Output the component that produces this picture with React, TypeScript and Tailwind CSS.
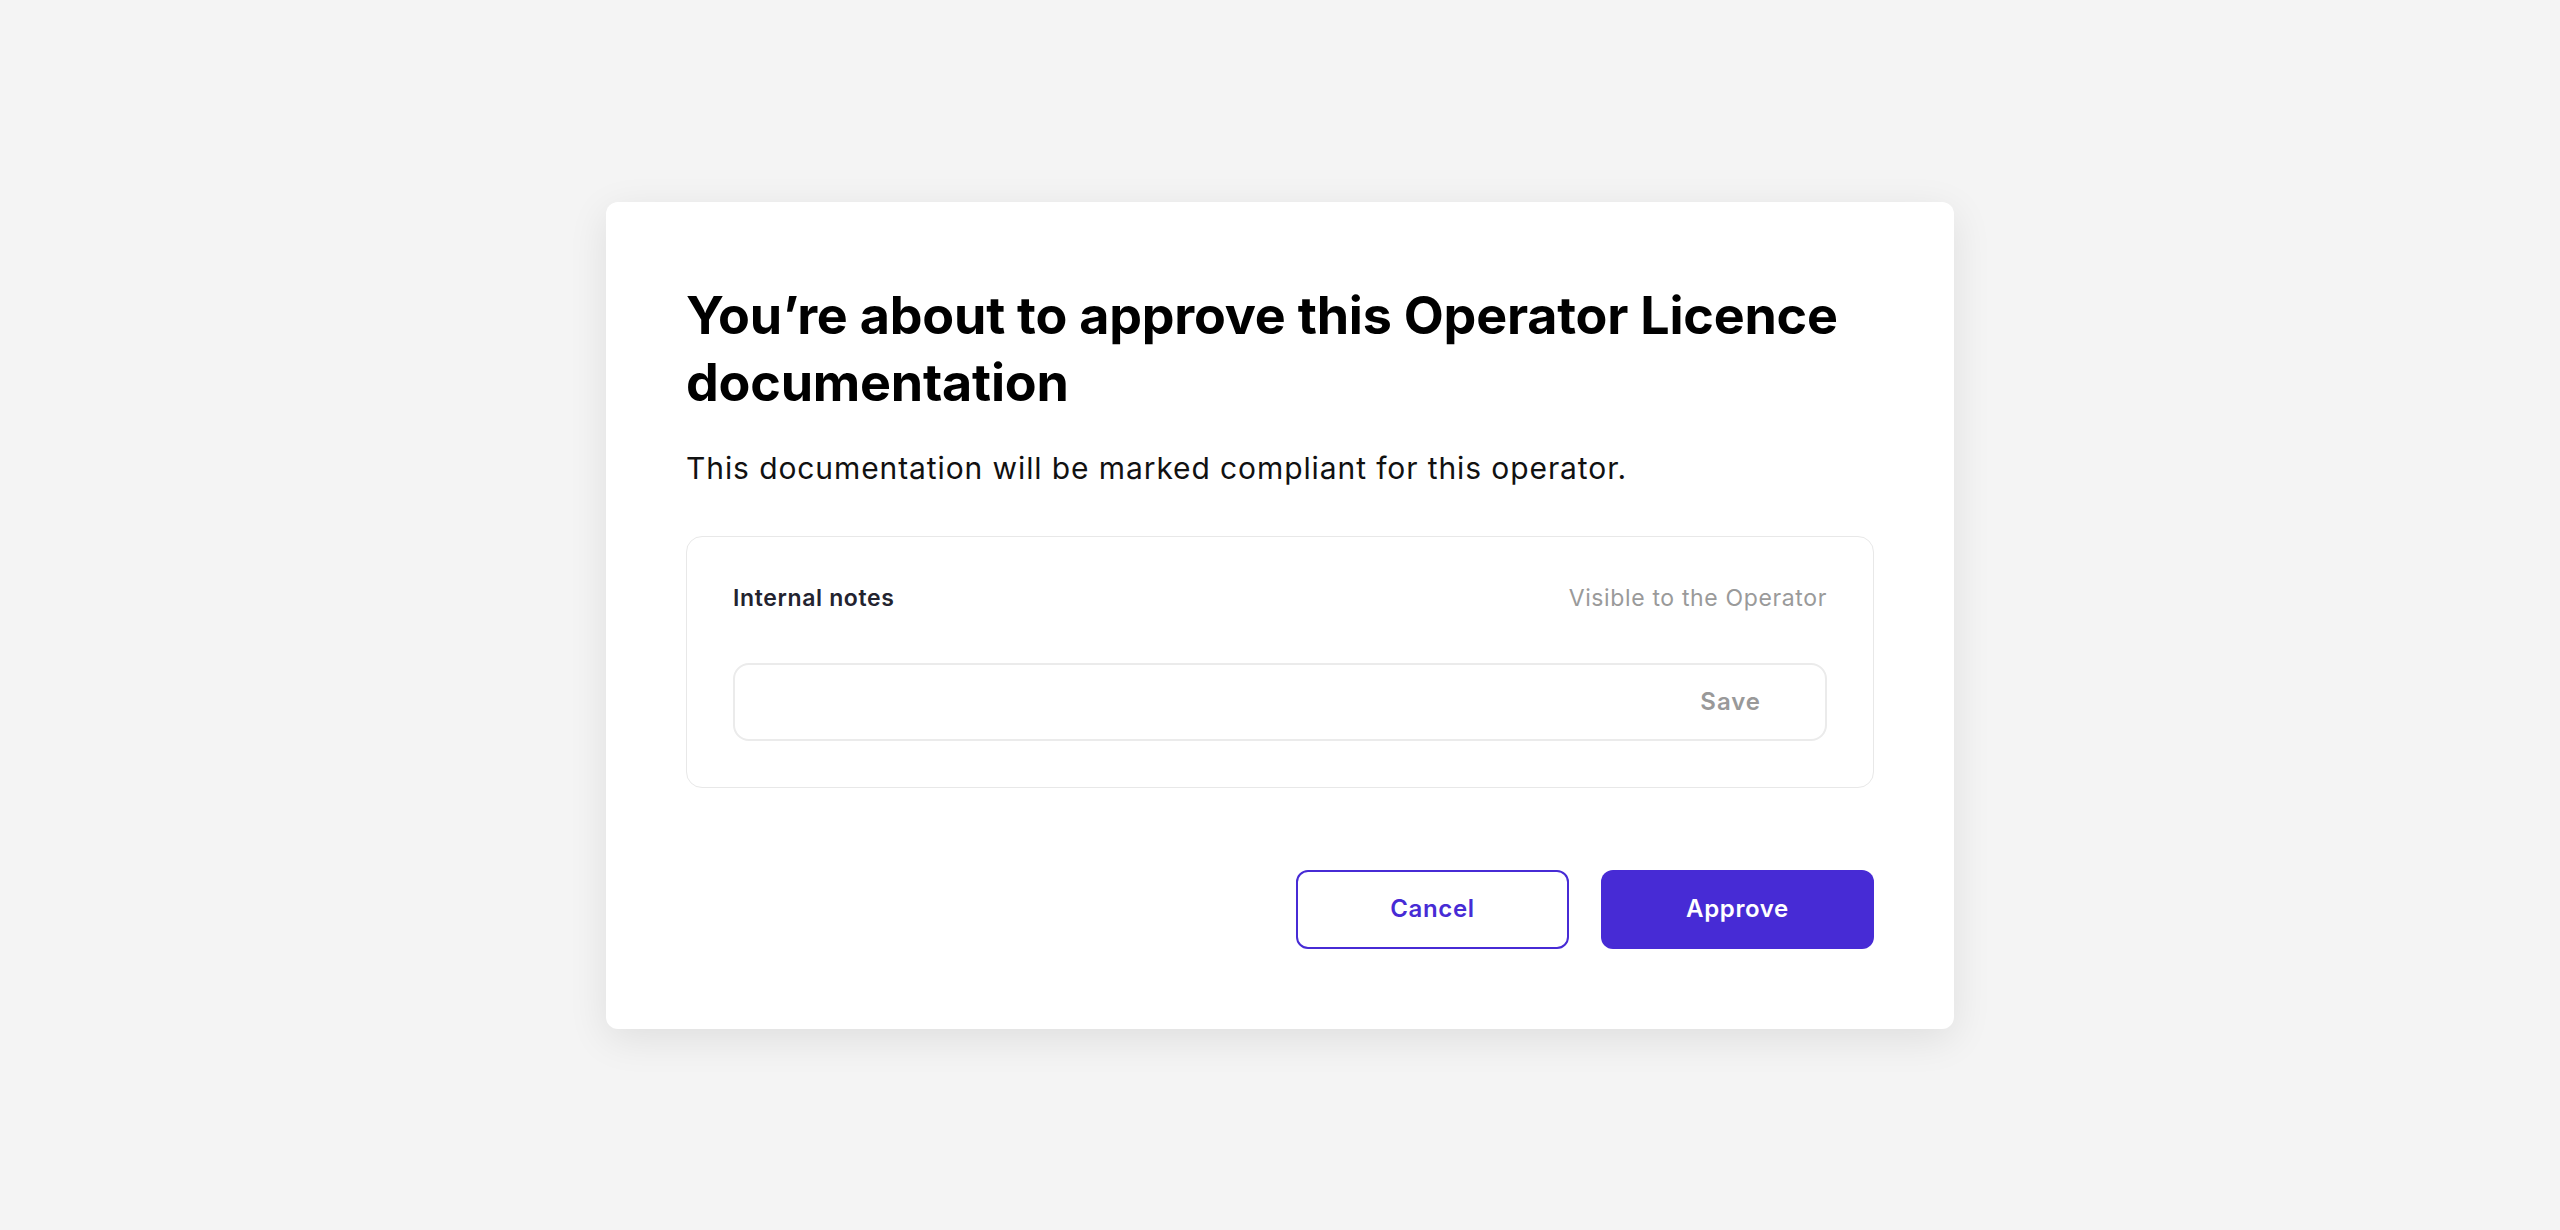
import { useState } from 'react'

export default function App() {
  const [note, setNote] = useState('')

  return (
    <div
      className="min-h-screen w-full bg-[#f4f4f4] flex items-center justify-center"
      style={{ fontFamily: 'Inter, "Noto Sans", sans-serif' }}
    >
      <div className="w-[1348px] bg-white rounded-[12px] shadow-[0_10px_40px_rgba(0,0,0,0.09)] px-20 pt-20 pb-20">
        {/* Heading */}
        <h1 className="text-[52px] leading-[67px] font-bold text-black tracking-[-0.004em]">
          You’re about to approve this Operator Licence documentation
        </h1>
        <p className="mt-8 text-[30px] leading-10 text-[#111111] tracking-[0.03em]">
          This documentation will be marked compliant for this operator.
        </p>

        {/* Notes card */}
        <div className="mt-12 border border-[#e8e8e8] rounded-2xl p-[46px] flex flex-col gap-12">
          <div className="flex items-center justify-between h-[32px] tracking-[0.04em]">
            <span className="text-[23px] font-semibold text-[#23232f]">Internal notes</span>
            <span className="text-[23px] text-[#9a9a9a]">Visible to the Operator</span>
          </div>
          <div className="h-[78px] border-2 border-[#ebebeb] rounded-2xl flex items-center pl-6 pr-16">
            <input
              type="text"
              value={note}
              onChange={(e) => setNote(e.target.value)}
              className="flex-1 bg-transparent outline-none text-[24px] text-[#23232f]"
            />
            <button type="button" className="text-[24px] font-semibold text-[#999999] tracking-[0.04em]">
              Save
            </button>
          </div>
        </div>

        {/* Actions */}
        <div className="mt-[82px] flex justify-end gap-8 tracking-[0.04em]">
          <button
            type="button"
            className="w-[273px] h-[79px] rounded-xl border-2 border-[#472bd5] text-[#472bd5] text-[24px] font-semibold"
          >
            Cancel
          </button>
          <button
            type="button"
            className="w-[273px] h-[79px] rounded-xl bg-[#472bd5] text-white text-[24px] font-semibold"
          >
            Approve
          </button>
        </div>
      </div>
    </div>
  )
}
